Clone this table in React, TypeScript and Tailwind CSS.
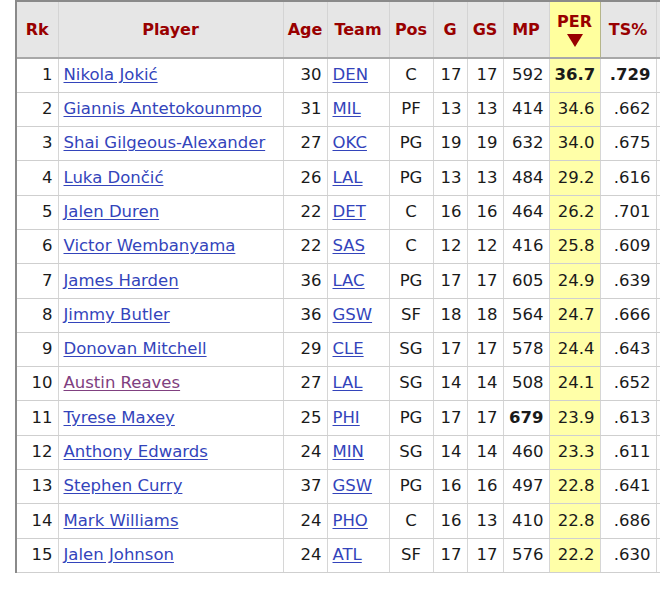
import React from 'react';

type Row = {
  rk: number;
  player: string;
  age: number;
  team: string;
  pos: string;
  g: number;
  gs: number;
  mp: number;
  per: string;
  ts: string;
  visited?: boolean;
  bold?: Array<'mp' | 'per' | 'ts'>;
};

const rows: Row[] = [
  { rk: 1, player: 'Nikola Jokić', age: 30, team: 'DEN', pos: 'C', g: 17, gs: 17, mp: 592, per: '36.7', ts: '.729', bold: ['per', 'ts'] },
  { rk: 2, player: 'Giannis Antetokounmpo', age: 31, team: 'MIL', pos: 'PF', g: 13, gs: 13, mp: 414, per: '34.6', ts: '.662' },
  { rk: 3, player: 'Shai Gilgeous-Alexander', age: 27, team: 'OKC', pos: 'PG', g: 19, gs: 19, mp: 632, per: '34.0', ts: '.675' },
  { rk: 4, player: 'Luka Dončić', age: 26, team: 'LAL', pos: 'PG', g: 13, gs: 13, mp: 484, per: '29.2', ts: '.616' },
  { rk: 5, player: 'Jalen Duren', age: 22, team: 'DET', pos: 'C', g: 16, gs: 16, mp: 464, per: '26.2', ts: '.701' },
  { rk: 6, player: 'Victor Wembanyama', age: 22, team: 'SAS', pos: 'C', g: 12, gs: 12, mp: 416, per: '25.8', ts: '.609' },
  { rk: 7, player: 'James Harden', age: 36, team: 'LAC', pos: 'PG', g: 17, gs: 17, mp: 605, per: '24.9', ts: '.639' },
  { rk: 8, player: 'Jimmy Butler', age: 36, team: 'GSW', pos: 'SF', g: 18, gs: 18, mp: 564, per: '24.7', ts: '.666' },
  { rk: 9, player: 'Donovan Mitchell', age: 29, team: 'CLE', pos: 'SG', g: 17, gs: 17, mp: 578, per: '24.4', ts: '.643' },
  { rk: 10, player: 'Austin Reaves', age: 27, team: 'LAL', pos: 'SG', g: 14, gs: 14, mp: 508, per: '24.1', ts: '.652', visited: true },
  { rk: 11, player: 'Tyrese Maxey', age: 25, team: 'PHI', pos: 'PG', g: 17, gs: 17, mp: 679, per: '23.9', ts: '.613', bold: ['mp'] },
  { rk: 12, player: 'Anthony Edwards', age: 24, team: 'MIN', pos: 'SG', g: 14, gs: 14, mp: 460, per: '23.3', ts: '.611' },
  { rk: 13, player: 'Stephen Curry', age: 37, team: 'GSW', pos: 'PG', g: 16, gs: 16, mp: 497, per: '22.8', ts: '.641' },
  { rk: 14, player: 'Mark Williams', age: 24, team: 'PHO', pos: 'C', g: 16, gs: 13, mp: 410, per: '22.8', ts: '.686' },
  { rk: 15, player: 'Jalen Johnson', age: 24, team: 'ATL', pos: 'SF', g: 17, gs: 17, mp: 576, per: '22.2', ts: '.630' },
];

const th = 'border-x border-[#d4d4d4] bg-[#e6e6e6] px-0 text-center align-middle text-[16px] font-bold text-[#990000]';
const td = 'border-x border-b border-x-[#d6d6d6] border-b-[#cfcfcf] border-b-dotted px-[5px] align-middle whitespace-nowrap';

const App: React.FC = () => {
  return (
    <div
      className="h-[609px] w-[660px] overflow-hidden bg-white text-[16.5px] text-[#1a1a1a]"
      style={{ fontFamily: '"DejaVu Sans", Verdana, sans-serif' }}
    >
      <table className="ml-[15px] w-[700px] table-fixed border-collapse">
        <colgroup>
          <col className="w-[42px]" />
          <col className="w-[225px]" />
          <col className="w-[44px]" />
          <col className="w-[62px]" />
          <col className="w-[44px]" />
          <col className="w-[34px]" />
          <col className="w-[36px]" />
          <col className="w-[46px]" />
          <col className="w-[51px]" />
          <col className="w-[56px]" />
          <col className="w-[60px]" />
        </colgroup>
        <thead>
          <tr className="h-[57px] border-t-2 border-b-2 border-t-[#8a8a8a] border-b-[#a8a8a8]">
            <th className={`${th} border-l-2 border-l-[#8a8a8a]`}>Rk</th>
            <th className={th}>Player</th>
            <th className={th}>Age</th>
            <th className={th}>Team</th>
            <th className={th}>Pos</th>
            <th className={th}>G</th>
            <th className={th}>GS</th>
            <th className={th}>MP</th>
            <th className="border-x border-[#b5b58a] bg-[#ffff9e] px-0 text-center align-middle text-[16px] font-bold text-[#990000]">
              <div className="leading-5">PER</div>
              <svg className="mx-auto mt-[2px]" width="16" height="13" viewBox="0 0 16 13">
                <path d="M0 0 H16 L8 13 Z" fill="#990000" />
              </svg>
            </th>
            <th className={th}>TS%</th>
            <th className={th} aria-hidden="true"></th>
          </tr>
        </thead>
        <tbody>
          {rows.map((r) => {
            const b = (k: 'mp' | 'per' | 'ts') => (r.bold?.includes(k) ? 'font-bold' : '');
            return (
              <tr key={r.rk} className="h-[34.3px]">
                <td className={`${td} border-l-2 border-l-[#8a8a8a] text-right`}>{r.rk}</td>
                <td className={`${td} text-left`}>
                  <a
                    href="#"
                    className={`underline underline-offset-2 ${r.visited ? 'text-[#804080]' : 'text-[#3344bb]'}`}
                  >
                    {r.player}
                  </a>
                </td>
                <td className={`${td} text-right`}>{r.age}</td>
                <td className={`${td} text-left`}>
                  <a href="#" className="text-[#3344bb] underline underline-offset-2">
                    {r.team}
                  </a>
                </td>
                <td className={`${td} text-center`}>{r.pos}</td>
                <td className={`${td} text-right`}>{r.g}</td>
                <td className={`${td} text-right`}>{r.gs}</td>
                <td className={`${td} text-right ${b('mp')}`}>{r.mp}</td>
                <td className={`${td} bg-[#ffffa8] text-right ${b('per')}`}>{r.per}</td>
                <td className={`${td} text-right ${b('ts')}`}>{r.ts}</td>
                <td className={`${td} text-right`}></td>
              </tr>
            );
          })}
        </tbody>
      </table>
    </div>
  );
};

export default App;
